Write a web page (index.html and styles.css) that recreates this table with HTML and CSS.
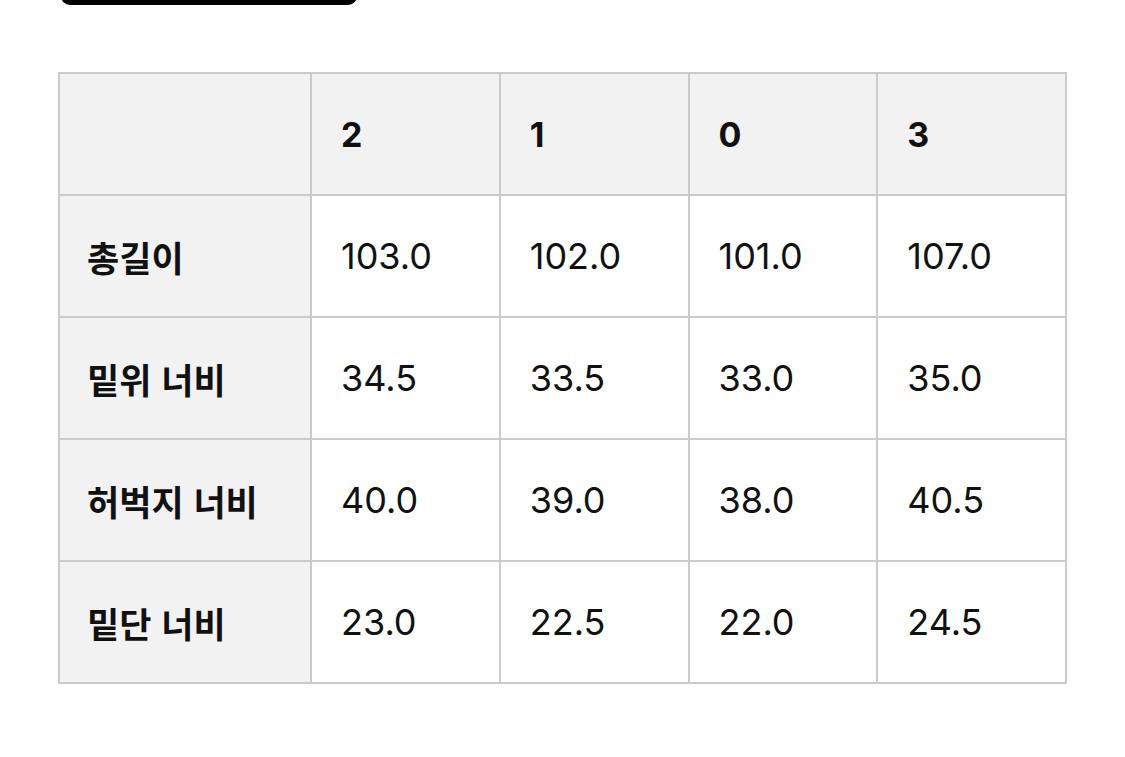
FILE: index.html
```html
<!DOCTYPE html>
<html lang="ko">
<head>
<meta charset="utf-8">
<link rel="stylesheet" href="styles.css">
</head>
<body>
<div class="page">
  <div class="top-button"></div>
  <table class="size-table">
    <thead>
      <tr><th class="label"></th><th>2</th><th>1</th><th>0</th><th>3</th></tr>
    </thead>
    <tbody>
      <tr><th class="label">총길이</th><td>103.0</td><td>102.0</td><td>101.0</td><td>107.0</td></tr>
      <tr><th class="label">밑위 너비</th><td>34.5</td><td>33.5</td><td>33.0</td><td>35.0</td></tr>
      <tr><th class="label">허벅지 너비</th><td>40.0</td><td>39.0</td><td>38.0</td><td>40.5</td></tr>
      <tr><th class="label">밑단 너비</th><td>23.0</td><td>22.5</td><td>22.0</td><td>24.5</td></tr>
    </tbody>
  </table>
</div>
</body>
</html>
```

FILE: styles.css
```css
html, body {
  margin: 0;
  padding: 0;
  background: #ffffff;
}
.page {
  padding: 0 0 0 58px;
  font-family: "Inter", "Noto Sans CJK KR", sans-serif;
  color: #111111;
}
.top-button {
  width: 296px;
  height: 40px;
  margin: -35px 0 0 3px;
  background: #000000;
  border-radius: 9px;
}
.size-table {
  margin-top: 67px;
  border-collapse: collapse;
  width: 1009px;
  table-layout: fixed;
}
.size-table th,
.size-table td {
  border: 2px solid #cbcbcb;
  height: 122px;
  padding: 0 0 0 29px;
  text-align: left;
  vertical-align: middle;
  font-size: 36px;
  box-sizing: border-box;
}
.size-table th.label {
  width: 252px;
}
.size-table thead th {
  background: #f2f2f2;
  font-weight: 700;
  font-size: 34px;
}
.size-table tbody th {
  background: #f2f2f2;
  font-weight: 700;
  font-size: 35px;
  padding-left: 27px;
  font-family: "Noto Sans CJK KR", sans-serif;
}
.size-table td {
  font-weight: 400;
  background: #ffffff;
}
```
